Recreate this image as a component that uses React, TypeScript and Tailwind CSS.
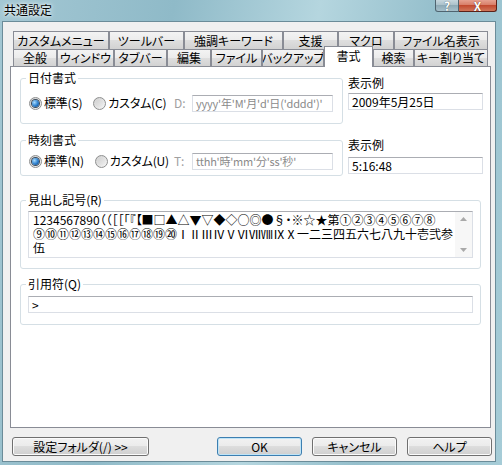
import React from "react";

const UI_FONT =
  "font-['Noto_Sans_CJK_JP','Noto_Sans_CJK_SC',sans-serif] [font-feature-settings:'palt'] whitespace-nowrap";

function Tab({ label, w, active }: { label: string; w: string; active?: boolean }) {
  if (active) {
    return (
      <div
        className={`${w} relative top-px z-10 flex h-[21px] shrink-0 items-start justify-center border-x border-t border-[#898c95] bg-white pt-[2px] text-[12px] leading-[14px] text-black`}
      >
        {label}
      </div>
    );
  }
  return (
    <div
      className={`${w} flex shrink-0 items-center justify-center overflow-hidden border-x border-t border-[#898c95] bg-[linear-gradient(#f3f3f3,#ebebeb_50%,#dedede_50%,#d2d2d2)] text-[12px] leading-[14px] text-black`}
    >
      {label}
    </div>
  );
}

function Radio({ checked }: { checked?: boolean }) {
  return (
    <span className="flex h-[13px] w-[13px] shrink-0 items-center justify-center rounded-full border border-[#8e8f8f] bg-[linear-gradient(135deg,#cfcfcf,#f6f6f6)]">
      {checked ? (
        <span className="h-[7px] w-[7px] rounded-full bg-[radial-gradient(circle_at_35%_35%,#a8dcff,#2a7dcc_55%,#0b3c74)] shadow-[0_0_0_1px_#3a4a5a]" />
      ) : (
        <span className="h-[7px] w-[7px] rounded-full bg-[linear-gradient(135deg,#d2d2d2,#ededed)]" />
      )}
    </span>
  );
}

function TextBox({ value, disabled, className }: { value: string; disabled?: boolean; className: string }) {
  return (
    <div
      className={`${className} flex h-[17px] shrink-0 items-center overflow-hidden whitespace-pre border border-[#dbdfe6] border-t-[#abadb3] bg-white px-[3px] leading-[14px] ${
        disabled ? "text-[11px] tracking-[-0.2px] text-[#8a8a8a]" : "text-[12px] text-black"
      }`}
    >
      {value}
    </div>
  );
}

function Button({ label, w, primary }: { label: string; w: string; primary?: boolean }) {
  return (
    <div
      className={`${w} flex h-[19px] items-center justify-center rounded-[3px] border text-[12px] leading-[14px] text-black ${
        primary
          ? "border-[#3c7fb1] bg-[linear-gradient(#f2f2f2,#ebebeb_50%,#dddddd_50%,#cfcfcf)] shadow-[inset_0_0_0_1px_#bfe4f7]"
          : "border-[#707070] bg-[linear-gradient(#f2f2f2,#ebebeb_50%,#dddddd_50%,#cfcfcf)] shadow-[inset_0_0_0_1px_#fbfbfb]"
      }`}
    >
      {label}
    </div>
  );
}

function DateRow({
  std,
  custom,
  prefix,
  format,
}: {
  std: string;
  custom: string;
  prefix: string;
  format: string;
}) {
  return (
    <div className="flex h-[16px] items-center pl-[8px]">
      <Radio checked />
      <span className="ml-[2px] shrink-0 tracking-[-0.2px]">{std}</span>
      <span className="ml-[11px] shrink-0">
        <Radio />
      </span>
      <span className="ml-[2px] shrink-0 tracking-[-0.2px]">{custom}</span>
      <span className="ml-auto w-[18px] shrink-0 text-[#a0a0a0]">{prefix}</span>
      <TextBox value={format} disabled className="mr-[9px] w-[141px]" />
    </div>
  );
}

const MIDASHI = [
  "1234567890（（［［「『【■□▲△▼▽◆◇○◎●§・※☆★第①②③④⑤⑥⑦⑧",
  "⑨⑩⑪⑫⑬⑭⑮⑯⑰⑱⑲⑳ⅠⅡⅢⅣⅤⅥⅦⅧⅨⅩ一二三四五六七八九十壱弐参",
  "伍",
];

export default function App() {
  return (
    <div
      className={`${UI_FONT} flex h-[465px] w-[502px] flex-col overflow-hidden bg-[linear-gradient(100deg,#a3c7d3_0%,#8fbac8_30%,#b5d6df_55%,#95bfcc_75%,#a6ccd7_100%)]`}
    >
      {/* Title bar */}
      <div className="flex h-[21px] shrink-0 items-start">
        <span className="pl-[4px] pt-[3px] text-[12px] leading-[14px] text-black [text-shadow:0_0_6px_#ffffff,0_0_3px_#ffffff]">
          共通設定
        </span>
        <div className="ml-auto mr-[5px] flex">
          <div className="flex h-[12px] w-[24px] items-end justify-center overflow-hidden rounded-bl-[3px] border border-t-0 border-[#4f6470] bg-[linear-gradient(#c6d6dd,#a8bfc9_50%,#8eaab6_50%,#a6c0cb)]">
            <span className="mb-[-1px] text-[12px] font-bold leading-[12px] text-white [text-shadow:0_0_1px_#2c3e48]">?</span>
          </div>
          <div className="flex h-[12px] w-[38px] items-end justify-center overflow-hidden rounded-br-[3px] border border-l-0 border-t-0 border-[#5b2118] bg-[linear-gradient(#e6a190,#d67a64_50%,#c24a30_50%,#d0765a)]">
            <span className="mb-[-1px] text-[12px] font-bold leading-[12px] text-white [text-shadow:0_0_1px_#4a1208]">X</span>
          </div>
        </div>
      </div>

      {/* Client area */}
      <div className="ml-[2px] flex h-[441px] w-[494px] flex-col border border-[#6b8c99] bg-[#f0f0f0] pl-[7px] pt-[9px]">
        {/* Tab rows */}
        <div className="ml-[3px] flex h-[18px]">
          <Tab label="カスタムメニュー" w="w-[96px]" />
          <Tab label="ツールバー" w="w-[75px]" />
          <Tab label="強調キーワード" w="w-[99px]" />
          <Tab label="支援" w="w-[55px]" />
          <Tab label="マクロ" w="w-[56px]" />
          <Tab label="ファイル名表示" w="w-[94px]" />
        </div>
        <div className="ml-[3px] flex h-[17px] items-end">
          <Tab label="全般" w="w-[44px] h-[17px]" />
          <Tab label="ウィンドウ" w="w-[57px] h-[17px]" />
          <Tab label="タブバー" w="w-[53px] h-[17px]" />
          <Tab label="編集" w="w-[44px] h-[17px]" />
          <Tab label="ファイル" w="w-[51px] h-[17px]" />
          <Tab label="バックアップ" w="w-[62px] h-[17px]" />
          <Tab label="書式" w="w-[49px]" active />
          <Tab label="検索" w="w-[41px] h-[17px]" />
          <Tab label="キー割り当て" w="w-[74px] h-[17px]" />
        </div>

        {/* Tab panel */}
        <div className="flex h-[362px] w-[481px] flex-col border border-[#898c95] bg-white pl-[9px] pt-[4px] text-[12px] leading-[14px] text-black">
          {/* 日付書式 */}
          <div className="flex">
            <fieldset className="h-[53px] w-[323px] rounded-[3px] border border-[#d5dfe5]">
              <legend className="ml-[5px] px-[2px] leading-[14px]">日付書式</legend>
              <div className="mt-[10px]">
                <DateRow std="標準(S)" custom="カスタム(C)" prefix="D:" format="yyyy'年'M'月'd'日('dddd')'" />
              </div>
            </fieldset>
            <div className="ml-[5px] flex w-[135px] flex-col">
              <span className="mt-[5px]">表示例</span>
              <TextBox value="2009年5月25日" className="mt-[3px] w-[135px]" />
            </div>
          </div>

          {/* 時刻書式 */}
          <div className="mt-[9px] flex">
            <fieldset className="h-[43px] w-[323px] rounded-[3px] border border-[#d5dfe5]">
              <legend className="ml-[5px] px-[2px] leading-[14px]">時刻書式</legend>
              <div className="mt-[6px]">
                <DateRow std="標準(N)" custom="カスタム(U)" prefix="T:" format="tthh'時'mm'分'ss'秒'" />
              </div>
            </fieldset>
            <div className="ml-[5px] flex w-[135px] flex-col">
              <span className="mt-[5px]">表示例</span>
              <TextBox value="5:16:48" className="mt-[5px] w-[135px]" />
            </div>
          </div>

          {/* 見出し記号 */}
          <fieldset className="mt-[17px] h-[76px] w-[461px] rounded-[3px] border border-[#d5dfe5]">
            <legend className="ml-[5px] px-[2px] leading-[14px]">見出し記号(R)</legend>
            <div className="mx-[7px] mt-[4px] flex h-[47px] border border-[#dbdfe6] border-t-[#abadb3] bg-white">
              <div className="flex-1 overflow-hidden whitespace-pre pl-[4px] pt-px leading-[14px]">
                {MIDASHI.map((line) => (
                  <div key={line}>{line}</div>
                ))}
              </div>
              <div className="flex w-[17px] flex-col items-center justify-between bg-[#f7f7f7] py-[5px]">
                <svg width="7" height="4" viewBox="0 0 7 4">
                  <path d="M0 4L3.5 0L7 4Z" fill="#a9a9a9" />
                </svg>
                <svg width="7" height="4" viewBox="0 0 7 4">
                  <path d="M0 0L3.5 4L7 0Z" fill="#a9a9a9" />
                </svg>
              </div>
            </div>
          </fieldset>

          {/* 引用符 */}
          <fieldset className="mt-[8px] h-[48px] w-[461px] rounded-[3px] border border-[#d5dfe5]">
            <legend className="ml-[5px] px-[2px] leading-[14px]">引用符(Q)</legend>
            <TextBox value=">" className="mx-[7px] mt-[5px]" />
          </fieldset>
        </div>

        {/* Buttons */}
        <div className="ml-[2px] mt-[9px] flex">
          <Button label="設定フォルダ(/) >>" w="w-[137px]" />
          <div className="ml-[68px]">
            <Button label="OK" w="w-[85px]" primary />
          </div>
          <div className="ml-[10px]">
            <Button label="キャンセル" w="w-[85px]" />
          </div>
          <div className="ml-[10px]">
            <Button label="ヘルプ" w="w-[85px]" />
          </div>
        </div>
      </div>
    </div>
  );
}
